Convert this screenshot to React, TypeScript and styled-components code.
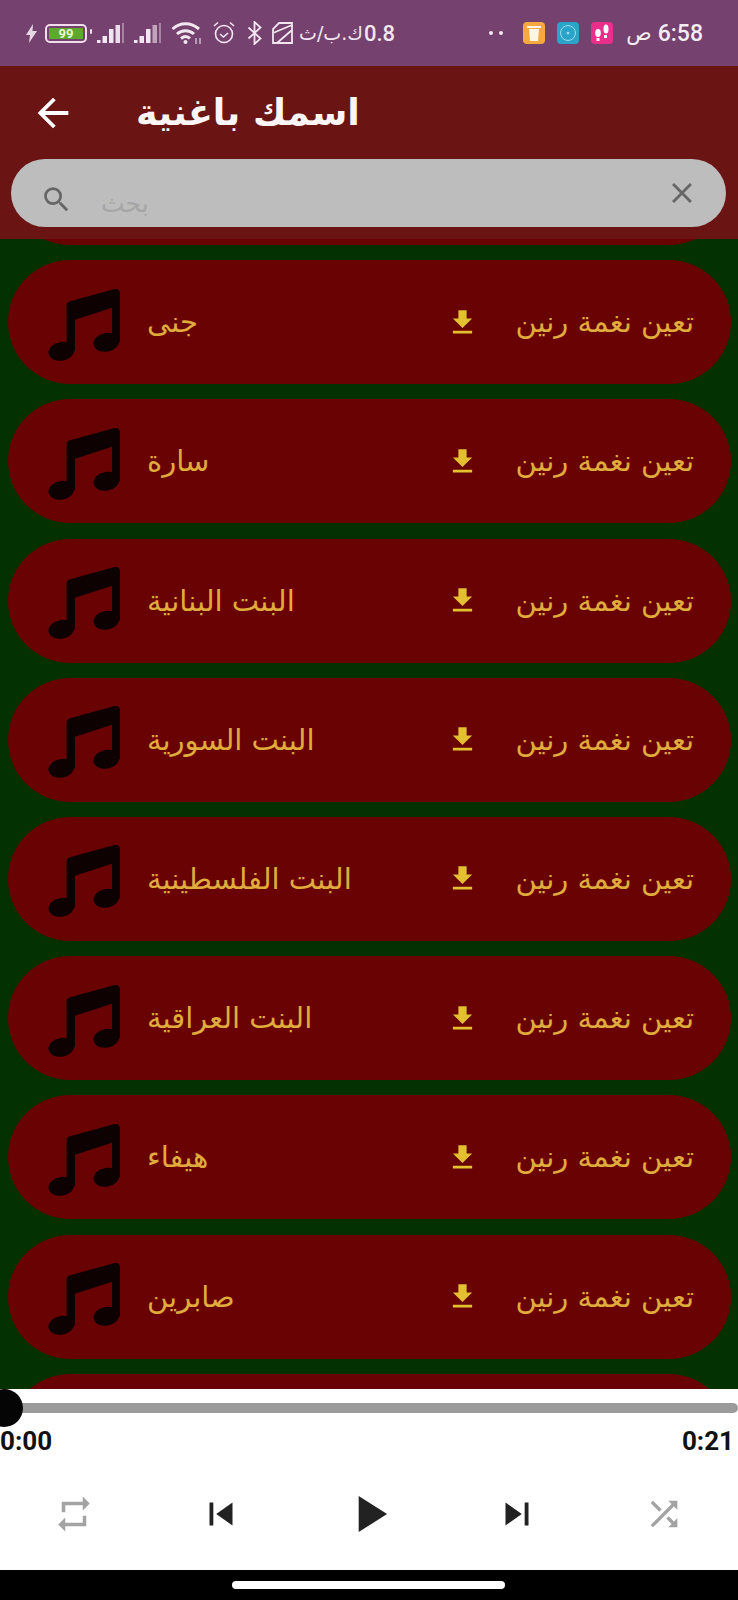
/**
 * Ringtone list screen - status bar, search header, song rows and player
 */

import React from 'react';
import styled, { createGlobalStyle } from 'styled-components';
import {
  MdArrowBack,
  MdClose,
  MdFileDownload,
  MdPlayArrow,
  MdRepeat,
  MdSearch,
  MdShuffle,
  MdSkipNext,
  MdSkipPrevious,
} from 'react-icons/md';

const GlobalStyle = createGlobalStyle`
  html, body {
    margin: 0;
    padding: 0;
    background: #000;
  }
`;

const Screen = styled.div`
  width: 738px;
  height: 1600px;
  display: flex;
  flex-direction: column;
  overflow: hidden;
  font-family: "DejaVu Sans", "Noto Sans", sans-serif;
`;

// Status bar
const StatusBar = styled.div`
  height: 66px;
  flex: none;
  background: #75416f;
  display: flex;
  align-items: center;
  justify-content: space-between;
  padding: 0 35px 0 26px;
  color: #f2e6f0;
`;

const StatusGroup = styled.div`
  display: flex;
  align-items: center;
`;

const Battery = styled.div`
  width: 34px;
  height: 11px;
  margin: 0 10px 0 8px;
  border: 2.5px solid #f0dcec;
  border-radius: 5px;
  padding: 2px;
  box-sizing: content-box;
  position: relative;
`;

const BatteryFill = styled.div`
  height: 100%;
  background: #5da92e;
  color: #e8f5d8;
  font: bold 13px/11px Roboto, sans-serif;
  text-align: center;
`;

const BatteryTip = styled.span`
  position: absolute;
  right: -7px;
  top: 3px;
  width: 2px;
  height: 5px;
  background: #f0dcec;
  border-radius: 1px;
`;

const Signal = styled.svg`
  width: 27px;
  height: 20px;
  margin-right: 10px;
`;

const StatusIcon = styled.svg<{ $gap?: number }>`
  margin-right: ${({ $gap }) => $gap ?? 0}px;
  flex: none;
`;

const Speed = styled.span`
  display: flex;
  align-items: center;
  gap: 1px;
  font: 500 22px Roboto, sans-serif;
  color: #f2e6f0;
`;

const SpeedUnit = styled.span`
  font: 400 19px "DejaVu Sans", sans-serif;
`;

const Dots = styled.span`
  display: flex;
  gap: 6px;
  margin-right: 20px;
`;

const Dot = styled.i`
  width: 4px;
  height: 4px;
  border-radius: 50%;
  background: #f2e6f0;
`;

const AppIcon = styled.div<{ $bg: string }>`
  width: 22px;
  height: 22px;
  border-radius: 4px;
  background: ${({ $bg }) => $bg};
  margin-right: 12px;
  display: flex;
  align-items: center;
  justify-content: center;
`;

const Clock = styled.span`
  font: 500 23px Roboto, sans-serif;
  color: #f4ecf3;
  margin-left: 1px;
  display: flex;
  align-items: center;
  gap: 6px;
`;

const ClockSuffix = styled.span`
  font: 400 21px "DejaVu Sans", sans-serif;
`;

// Header
const Header = styled.header`
  flex: none;
  height: 173px;
  background: #6a1414;
  box-sizing: border-box;
  padding: 0 12px 0 11px;
  position: relative;
  z-index: 1;
`;

const TitleRow = styled.div`
  height: 93px;
  display: flex;
  align-items: center;
  padding-left: 19px;
  color: #fff;
`;

const Title = styled.h1`
  margin: 0 0 0 60px;
  font: bold 36.5px "DejaVu Sans", sans-serif;
  color: #fbf5f5;
`;

const SearchBar = styled.div`
  height: 68px;
  border-radius: 34px;
  background: #bdbdbd;
  display: flex;
  align-items: center;
  padding: 0 27px 0 29px;
  color: #666;
`;

const SearchIcon = styled(MdSearch)`
  flex: none;
  margin-top: 12px;
`;

const Placeholder = styled.span`
  flex: 1;
  margin-left: 28px;
  padding-top: 20px;
  font: 400 25px "DejaVu Sans", sans-serif;
  color: #a6a6a6;
`;

// Song list
const List = styled.main`
  flex: 1;
  min-height: 0;
  overflow: hidden;
  background: #033102;
  display: flex;
  flex-direction: column;
  gap: 15.2px;
  padding: 0 7px 0 8px;
`;

const Row = styled.div`
  flex: none;
  height: 124px;
  border-radius: 62px;
  background: #690202;
  display: flex;
  align-items: center;
  padding: 0 37px 0 40px;
  &:first-child {
    margin-top: -118px;
  }
`;

const Note = styled.svg`
  flex: none;
  width: 72px;
  height: 72px;
  margin-top: 5px;
  fill: #0d0101;
`;

const SongName = styled.span`
  flex: 1;
  margin-left: 27px;
  font: 400 29px "DejaVu Sans", sans-serif;
  color: #e0ac3c;
`;

const Download = styled(MdFileDownload)`
  flex: none;
  color: #e3c02f;
  font-size: 33px;
`;

const SetTone = styled.span`
  margin-left: 36px;
  font: 400 29px "DejaVu Sans", sans-serif;
  color: #e0ac3c;
`;

// Player
const Player = styled.section`
  flex: none;
  height: 181px;
  background: #fff;
  position: relative;
  display: flex;
  flex-direction: column;
`;

const Track = styled.div`
  height: 10px;
  margin-top: 14px;
  background: #9b9b9b;
  border-radius: 0 5px 5px 0;
`;

const Thumb = styled.span`
  position: absolute;
  left: -15px;
  top: 0;
  width: 38px;
  height: 38px;
  border-radius: 50%;
  background: #050505;
`;

const Times = styled.div`
  display: flex;
  justify-content: space-between;
  padding: 12px 4px 0 0;
  font: 700 26px/32px Roboto, sans-serif;
  color: #111;
`;

const Controls = styled.div`
  flex: 1;
  display: grid;
  grid-template-columns: repeat(5, 1fr);
  justify-items: center;
  align-items: center;
`;

const ControlButton = styled.button<{ $muted?: boolean }>`
  border: 0;
  padding: 0;
  background: none;
  display: flex;
  color: ${({ $muted }) => ($muted ? '#a3a3a3' : '#222')};
`;

// Navigation strip
const NavStrip = styled.div`
  flex: none;
  height: 30px;
  background: #000;
  display: flex;
  justify-content: center;
  align-items: flex-start;
  padding-top: 11px;
  box-sizing: border-box;
`;

const HomeBar = styled.div`
  width: 273px;
  height: 8px;
  border-radius: 4px;
  background: #fff;
  margin-right: 1px;
`;

const SONGS = [
  'ياسمين',
  'جنى',
  'سارة',
  'البنت البنانية',
  'البنت السورية',
  'البنت الفلسطينية',
  'البنت العراقية',
  'هيفاء',
  'صابرين',
  'ليلى',
];

const SignalBars: React.FC<{ faded?: boolean }> = ({ faded }) => (
  <Signal viewBox="0 0 27 20">
    <path d="M0 20h3.500v-3H0z" fill="#f2e6f0" />
    <path d="M5.500 20H10v-7H5.500z" fill="#f2e6f0" />
    <path d="M12 20h4.500V6H12z" fill="#f2e6f0" />
    <path d="M18.500 20H23V2h-4.500z" fill="#f2e6f0" opacity={faded ? 0.6 : 0.95} />
    <path d="M25 20h2V0h-2z" fill="#f2e6f0" opacity={0.4} />
  </Signal>
);

const MusicNote: React.FC = () => (
  <Note viewBox="0 0 216 216">
    <ellipse cx="40" cy="187" rx="39" ry="28" transform="rotate(-10 40 187)" />
    <ellipse cx="175" cy="160" rx="39" ry="28" transform="rotate(-10 175 160)" />
    <path d="M56 187V50Q56 40 66 37L200 0Q216-2 216 14V160H192V56L81 92V187Z" />
  </Note>
);

const App: React.FC = () => (
  <Screen>
    <GlobalStyle />
    <StatusBar>
      <StatusGroup>
        <StatusIcon width="11" height="19" viewBox="0 0 11 19" fill="#e6d6e3">
          <path d="M7 0 0 11h4l-1 8 8-12H6.500z" />
        </StatusIcon>
        <Battery>
          <BatteryFill>99</BatteryFill>
          <BatteryTip />
        </Battery>
        <SignalBars />
        <SignalBars faded />
        <StatusIcon $gap={10} width="31" height="24" viewBox="0 0 31 24" fill="none" stroke="#f2e6f0" strokeWidth="3">
          <path d="M1.500 8C9 1 20 1 28 8" />
          <path d="M6 13c5-4.500 12-4.500 17 0" />
          <path d="M10 17.500c3-2.500 6.500-2.500 9 0" />
          <circle cx="14.500" cy="21" r="2" fill="#f2e6f0" stroke="none" />
          <path d="M25 17v6M29 17v6" strokeWidth="1.500" opacity="0.7" />
        </StatusIcon>
        <StatusIcon $gap={11} width="24" height="24" viewBox="0 0 24 24" fill="none" stroke="#f2e6f0" strokeWidth="1.600">
          <circle cx="12" cy="13" r="8.500" />
          <path d="M8 13l3.500 3 4.500-4M2 5l4-3.500M22 5l-4-3.500" />
        </StatusIcon>
        <StatusIcon $gap={10} width="15" height="24" viewBox="0 0 15 24" fill="none" stroke="#f2e6f0" strokeWidth="1.800">
          <path d="M1.500 6.500l12 11L7.500 23V1l6 5.500-12 11" />
        </StatusIcon>
        <StatusIcon $gap={6} width="21" height="22" viewBox="0 0 21 22" fill="none" stroke="#f2e6f0" strokeWidth="1.800">
          <path d="M1 21V7l6-6h13v20zM1 11l19-8M5 21 20 8" />
        </StatusIcon>
        <Speed>
          <SpeedUnit dir="rtl">ك.ب/ث</SpeedUnit>
          <span>0.8</span>
        </Speed>
      </StatusGroup>
      <StatusGroup>
        <Dots>
          <Dot />
          <Dot />
        </Dots>
        <AppIcon $bg="#f7a93f">
          <svg width="14" height="16" viewBox="0 0 14 16" fill="#fff6e6">
            <path d="M0 1h14v2H0zM2 4h10l-1 12H3z" />
          </svg>
        </AppIcon>
        <AppIcon $bg="#2aa5c9">
          <svg width="18" height="18" viewBox="0 0 18 18" fill="none" stroke="#9fdcec" strokeWidth="1">
            <circle cx="9" cy="9" r="7.500" />
            <circle cx="9" cy="9" r="1" fill="#e6f7fb" />
          </svg>
        </AppIcon>
        <AppIcon $bg="#e92f8b">
          <svg width="18" height="18" viewBox="0 0 18 18" fill="#fff">
            <ellipse cx="5" cy="9" rx="2.800" ry="4" />
            <path d="M3.500 14h3v3h-3z" />
            <ellipse cx="13" cy="5" rx="2.500" ry="4.500" />
            <path d="M11 11h3v3h-3z" />
          </svg>
        </AppIcon>
        <Clock>
          <ClockSuffix>ص</ClockSuffix>6:58
        </Clock>
      </StatusGroup>
    </StatusBar>

    <Header>
      <TitleRow>
        <MdArrowBack size={46} />
        <Title dir="rtl">اسمك باغنية</Title>
      </TitleRow>
      <SearchBar>
        <SearchIcon size={33} />
        <Placeholder>
          <span dir="rtl">بحث</span>
        </Placeholder>
        <MdClose size={34} />
      </SearchBar>
    </Header>

    <List>
      {SONGS.map((song) => (
        <Row key={song}>
          <MusicNote />
          <SongName>
            <span dir="rtl">{song}</span>
          </SongName>
          <Download />
          <SetTone dir="rtl">تعين نغمة رنين</SetTone>
        </Row>
      ))}
    </List>

    <Player>
      <Track />
      <Thumb />
      <Times>
        <span>0:00</span>
        <span>0:21</span>
      </Times>
      <Controls>
        <ControlButton $muted>
          <MdRepeat size={42} />
        </ControlButton>
        <ControlButton>
          <MdSkipPrevious size={46} />
        </ControlButton>
        <ControlButton>
          <MdPlayArrow size={62} />
        </ControlButton>
        <ControlButton>
          <MdSkipNext size={46} />
        </ControlButton>
        <ControlButton $muted>
          <MdShuffle size={40} />
        </ControlButton>
      </Controls>
    </Player>

    <NavStrip>
      <HomeBar />
    </NavStrip>
  </Screen>
);

export default App;
